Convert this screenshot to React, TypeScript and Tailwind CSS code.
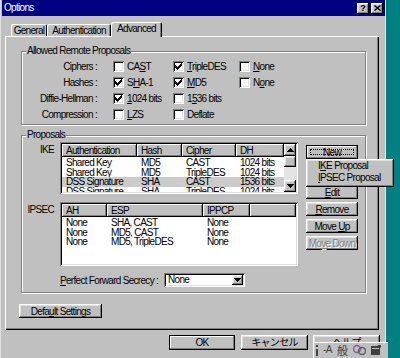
import React from "react";

const RAISED =
  "shadow-[inset_-1px_-1px_0_#000,inset_1px_1px_0_#fff,inset_-2px_-2px_0_#808080,inset_2px_2px_0_#dfdfdf]";
const SUNKEN =
  "shadow-[inset_1px_1px_0_#808080,inset_-1px_-1px_0_#fff,inset_2px_2px_0_#000,inset_-2px_-2px_0_#dfdfdf]";
const HEAD =
  "shadow-[inset_-1px_-1px_0_#000,inset_1px_1px_0_#fff,inset_-2px_-2px_0_#808080]";
const GROUP =
  "border border-[#808080] shadow-[inset_1px_1px_0_#fff,1px_1px_0_#fff]";

function U({ children }: { children: React.ReactNode }) {
  return <span className="underline decoration-1 underline-offset-[1px]">{children}</span>;
}

function Check({ checked }: { checked: boolean }) {
  return (
    <span className={`w-[11px] h-[11px] bg-white flex items-center justify-center shrink-0 ${SUNKEN}`}>
      {checked && (
        <svg width="7" height="7" viewBox="0 0 7 7" shapeRendering="crispEdges">
          <path d="M0 2h1v3h-1zM1 3h1v3h-1zM2 4h1v3h-1zM3 3h1v3h-1zM4 2h1v3h-1zM5 1h1v3h-1zM6 0h1v3h-1z" fill="#000" />
        </svg>
      )}
    </span>
  );
}

function Arrow({ up }: { up?: boolean }) {
  return (
    <svg width="7" height="4" viewBox="0 0 7 4" shapeRendering="crispEdges">
      {up ? (
        <path d="M3 0h1v1h1v1h1v1h1v1h-7v-1h1v-1h1v-1h1z" fill="#000" />
      ) : (
        <path d="M0 0h7v1h-1v1h-1v1h-1v1h-1v-1h-1v-1h-1v-1h-1z" fill="#000" />
      )}
    </svg>
  );
}

function Btn({
  size,
  children,
  def,
  focus,
  disabled,
}: {
  size: string;
  children: React.ReactNode;
  def?: boolean;
  focus?: boolean;
  disabled?: boolean;
}) {
  return (
    <div
      className={`${size} relative bg-[#c0c0c0] flex items-center justify-center shrink-0 whitespace-nowrap ${
        def ? "border border-black shadow-[inset_-1px_-1px_0_#808080,inset_1px_1px_0_#fff]" : RAISED
      } ${disabled ? "text-[#808080] [text-shadow:1px_1px_0_#fff]" : "text-black"}`}
    >
      {focus && <span className="absolute inset-[3px] border border-dotted border-black" />}
      <span className="relative">{children}</span>
    </div>
  );
}

const remoteRows: { label: string; items: { c: boolean; t: React.ReactNode }[] }[] = [
  {
    label: "Ciphers :",
    items: [
      { c: false, t: <>CA<U>S</U>T</> },
      { c: true, t: <><U>T</U>ripleDES</> },
      { c: false, t: <><U>N</U>one</> },
    ],
  },
  {
    label: "Hashes :",
    items: [
      { c: true, t: <>S<U>H</U>A-1</> },
      { c: true, t: <><U>M</U>D5</> },
      { c: false, t: <>N<U>o</U>ne</> },
    ],
  },
  {
    label: "Diffie-Hellman :",
    items: [
      { c: true, t: <><U>1</U>024 bits</> },
      { c: false, t: <>1<U>5</U>36 bits</> },
    ],
  },
  {
    label: "Compression :",
    items: [
      { c: false, t: <><U>L</U>ZS</> },
      { c: false, t: <>Deflate</> },
    ],
  },
];

const colW = ["w-[60px]", "w-[66px]", "w-[60px]"];

const ikeW = ["w-[75px]", "w-[45px]", "w-[54px]", "w-[48px]"];
const ikeHead = ["Authentication", "Hash", "Cipher", "DH"];
const ikeRows = [
  ["Shared Key", "MD5", "CAST", "1024 bits"],
  ["Shared Key", "MD5", "TripleDES", "1024 bits"],
  ["DSS Signature", "SHA", "CAST", "1536 bits"],
  ["DSS Signature", "SHA", "TripleDES", "1024 bits"],
];

const ipW = ["w-[45px]", "w-[96px]", "w-[47px]", "flex-1"];
const ipHead = ["AH", "ESP", "IPPCP", ""];
const ipRows = [
  ["None", "SHA, CAST", "None", ""],
  ["None", "MD5, CAST", "None", ""],
  ["None", "MD5, TripleDES", "None", ""],
];

export default function App() {
  return (
    <div className="w-[400px] h-[358px] bg-[#008080] flex overflow-hidden relative font-['Liberation_Sans','Noto_Sans_CJK_JP',sans-serif] text-[10px] tracking-[-0.7px] text-black">
      <div className="w-[386px] h-[358px] bg-[#c0c0c0] flex flex-col border-l border-l-[#dfdfdf] border-r border-r-[#e8e8e8] shrink-0">
        {/* Title bar */}
        <div className="ml-[1px] h-[16px] bg-[#000080] flex items-center justify-between pl-[2px] pr-[2px]">
          <span className="text-white leading-[16px]">Options</span>
          <div className="flex gap-[2px]">
            <div className={`w-[12px] h-[11px] bg-[#c0c0c0] flex items-center justify-center font-bold text-[9px] leading-none tracking-normal ${RAISED}`}>?</div>
            <div className={`w-[12px] h-[11px] bg-[#c0c0c0] flex items-center justify-center ${RAISED}`}>
              <svg width="7" height="6" viewBox="0 0 7 6">
                <path d="M0.5 0.5L6.5 5.5M6.5 0.5L0.5 5.5" stroke="#000" strokeWidth="1.4" />
              </svg>
            </div>
          </div>
        </div>

        {/* Tabs */}
        <div className="h-[20px] flex items-end pl-[10px] relative z-10">
          <div className="w-[36px] h-[12px] flex items-center justify-center rounded-t-[2px] leading-[11px] whitespace-nowrap shadow-[inset_1px_1px_0_#fff,inset_-1px_0_0_#000]">
            General
          </div>
          <div className="w-[64px] h-[12px] flex items-center justify-center rounded-t-[2px] leading-[11px] whitespace-nowrap shadow-[inset_1px_1px_0_#fff,inset_-1px_0_0_#000,inset_-2px_0_0_#808080]">
            Authentication
          </div>
          <div className="w-[51px] h-[15px] mb-[-1px] bg-[#c0c0c0] flex items-start pt-[1px] justify-center rounded-t-[2px] leading-[11px] whitespace-nowrap shadow-[inset_1px_1px_0_#fff,inset_-1px_0_0_#000,inset_-2px_0_0_#808080]">
            Advanced
          </div>
        </div>

        {/* Tab panel */}
        <div className="ml-[4px] w-[374px] h-[294px] relative flex flex-col pl-[16px] pt-[15px] shadow-[inset_1px_1px_0_#fff,inset_-1px_-1px_0_#000,inset_-2px_-2px_0_#808080]">
          {/* Allowed Remote Proposals */}
          <div className={`w-[345px] h-[74px] relative flex flex-col pt-[6px] ${GROUP}`}>
            <span className="absolute left-[4px] top-[-7px] bg-[#c0c0c0] px-[1px] leading-[12px] whitespace-nowrap">
              Allowed Remote Proposals
            </span>
            {remoteRows.map((r, i) => (
              <div key={i} className="h-[16px] flex items-center">
                <div className="w-[75px] text-right whitespace-nowrap">{r.label}</div>
                <div className="w-[16px]" />
                {r.items.map((it, j) => (
                  <div key={j} className={`${colW[j]} flex items-center gap-[3px] whitespace-nowrap`}>
                    <Check checked={it.c} />
                    <span className="leading-[11px]">{it.t}</span>
                  </div>
                ))}
              </div>
            ))}
          </div>

          {/* Proposals */}
          <div className={`mt-[10px] w-[345px] h-[158px] relative flex ${GROUP}`}>
            <span className="absolute left-[4px] top-[-7px] bg-[#c0c0c0] px-[1px] leading-[12px]">Proposals</span>
            <div className="flex flex-col pt-[6px]">
              {/* IKE */}
              <div className="flex">
                <div className="w-[38px] pr-[6px] text-right pt-[2px] leading-[12px]">IKE</div>
                <div className={`w-[238px] h-[52px] bg-white p-[2px] flex ${SUNKEN}`}>
                  <div className="w-[222px] flex flex-col overflow-hidden">
                    <div className="h-[13px] flex shrink-0">
                      {ikeHead.map((h, j) => (
                        <div key={j} className={`${ikeW[j]} h-[13px] bg-[#c0c0c0] pl-[4px] leading-[13px] whitespace-nowrap ${HEAD}`}>
                          {h}
                        </div>
                      ))}
                    </div>
                    <div className="flex flex-col pt-[1px]">
                      {ikeRows.map((r, i) => (
                        <div key={i} className={`flex h-[9.5px] leading-[9.5px] shrink-0 ${i === 2 ? "bg-[#cbcbcb]" : ""}`}>
                          {r.map((c, j) => (
                            <div key={j} className={`${ikeW[j]} pl-[4px] whitespace-nowrap overflow-hidden`}>
                              {c}
                            </div>
                          ))}
                        </div>
                      ))}
                    </div>
                  </div>
                  <div className="w-[12px] flex flex-col bg-[#e4e4e4]">
                    <div className={`h-[12px] bg-[#c0c0c0] flex items-center justify-center ${RAISED}`}>
                      <Arrow up />
                    </div>
                    <div className={`h-[11px] bg-[#c0c0c0] ${RAISED}`} />
                    <div className="flex-1" />
                    <div className={`h-[12px] bg-[#c0c0c0] flex items-center justify-center ${RAISED}`}>
                      <Arrow />
                    </div>
                  </div>
                </div>
              </div>

              {/* IPSEC */}
              <div className="flex mt-[8px]">
                <div className="w-[38px] pr-[6px] text-right pt-[2px] leading-[12px]">IPSEC</div>
                <div className={`w-[238px] h-[64px] bg-white p-[2px] flex flex-col ${SUNKEN}`}>
                  <div className="h-[13px] flex shrink-0">
                    {ipHead.map((h, j) => (
                      <div key={j} className={`${ipW[j]} h-[13px] bg-[#c0c0c0] pl-[4px] leading-[13px] whitespace-nowrap ${HEAD}`}>
                        {h}
                      </div>
                    ))}
                  </div>
                  <div className="flex flex-col pt-[1px]">
                    {ipRows.map((r, i) => (
                      <div key={i} className="flex h-[9.5px] leading-[9.5px] shrink-0">
                        {r.map((c, j) => (
                          <div key={j} className={`${ipW[j]} pl-[4px] whitespace-nowrap overflow-hidden`}>
                            {c}
                          </div>
                        ))}
                      </div>
                    ))}
                  </div>
                </div>
              </div>

              {/* PFS */}
              <div className="flex mt-[7px] items-center h-[14px]">
                <div className="w-[38px]" />
                <div className="w-[104px] whitespace-nowrap">
                  <U>P</U>erfect Forward Secrecy :
                </div>
                <div className={`w-[81px] h-[14px] bg-white p-[2px] flex ${SUNKEN}`}>
                  <span className="flex-1 pl-[2px] leading-[10px]">None</span>
                  <div className={`w-[11px] h-[10px] bg-[#c0c0c0] flex items-center justify-center ${RAISED}`}>
                    <Arrow />
                  </div>
                </div>
              </div>
            </div>

            {/* Buttons */}
            <div className="flex flex-col pt-[9px] ml-[8px]">
              <Btn size="w-[52px] h-[14px]" def focus>
                New
              </Btn>
              <div className="mt-[26px]">
                <Btn size="w-[52px] h-[14px]">
                  <U>E</U>dit
                </Btn>
              </div>
              <div className="mt-[3px]">
                <Btn size="w-[52px] h-[14px]">
                  <U>R</U>emove
                </Btn>
              </div>
              <div className="mt-[3px]">
                <Btn size="w-[52px] h-[14px]">
                  Move <U>U</U>p
                </Btn>
              </div>
              <div className="mt-[3px]">
                <Btn size="w-[52px] h-[14px]" disabled>
                  Mo<U>v</U>e Down
                </Btn>
              </div>
            </div>
          </div>

          {/* Default Settings */}
          <div className="mt-[11px] ml-[-2px]">
            <Btn size="w-[83px] h-[14px]">
              Defa<U>u</U>lt Settings
            </Btn>
          </div>
        </div>

        {/* Bottom buttons */}
        <div className="mt-[5px] flex pl-[168px]">
          <Btn size="w-[66px] h-[15px]" def>
            OK
          </Btn>
          <div className="ml-[6px]">
            <Btn size="w-[67px] h-[15px]">キャンセル</Btn>
          </div>
          <div className="ml-[5px]">
            <Btn size="w-[67px] h-[15px]">ヘルプ</Btn>
          </div>
        </div>
      </div>

      {/* Popup menu */}
      <div className={`absolute left-[306px] top-[159px] w-[88px] h-[28px] bg-[#c0c0c0] pt-[1px] ${RAISED}`}>
        <div className="pl-[12px] h-[12px] leading-[12px] whitespace-nowrap">
          I<U>K</U>E Proposal
        </div>
        <div className="pl-[12px] h-[12px] leading-[12px] whitespace-nowrap">
          <U>I</U>PSEC Proposal
        </div>
      </div>

      {/* IME toolbar */}
      <div className="absolute left-[313px] top-[342px] w-[75px] h-[16px] bg-[#c0c0c0] flex items-center pl-[1px] shadow-[inset_1px_1px_0_#fff] text-[#404040] tracking-normal">
        <div className="w-[6px] flex justify-center">
          <svg width="3" height="12" viewBox="0 0 3 12">
            <rect x="0" y="1" width="2" height="2" fill="#404040" />
            <rect x="0" y="5" width="2" height="7" fill="#404040" />
          </svg>
        </div>
        <div className="w-[15px] flex justify-center text-[10px] leading-none tracking-[-0.5px]">-A</div>
        <div className="w-[15px] flex justify-center text-[11px] leading-none font-['Noto_Sans_CJK_JP',sans-serif]">般</div>
        <div className="w-[19px] flex justify-center">
          <svg width="13" height="12" viewBox="0 0 13 12">
            <circle cx="4" cy="5" r="3.5" fill="none" stroke="#8060a0" strokeWidth="1.5" />
            <circle cx="9" cy="7" r="3.5" fill="none" stroke="#606060" strokeWidth="1.5" />
          </svg>
        </div>
        <div className="w-[14px] flex justify-center">
          <svg width="12" height="12" viewBox="0 0 12 12">
            <rect x="1" y="2" width="9" height="9" fill="#404040" />
            <rect x="2" y="4" width="7" height="1" fill="#c0c0c0" />
            <path d="M7 1L11 1L11 4Z" fill="#404040" />
          </svg>
        </div>
      </div>
    </div>
  );
}
